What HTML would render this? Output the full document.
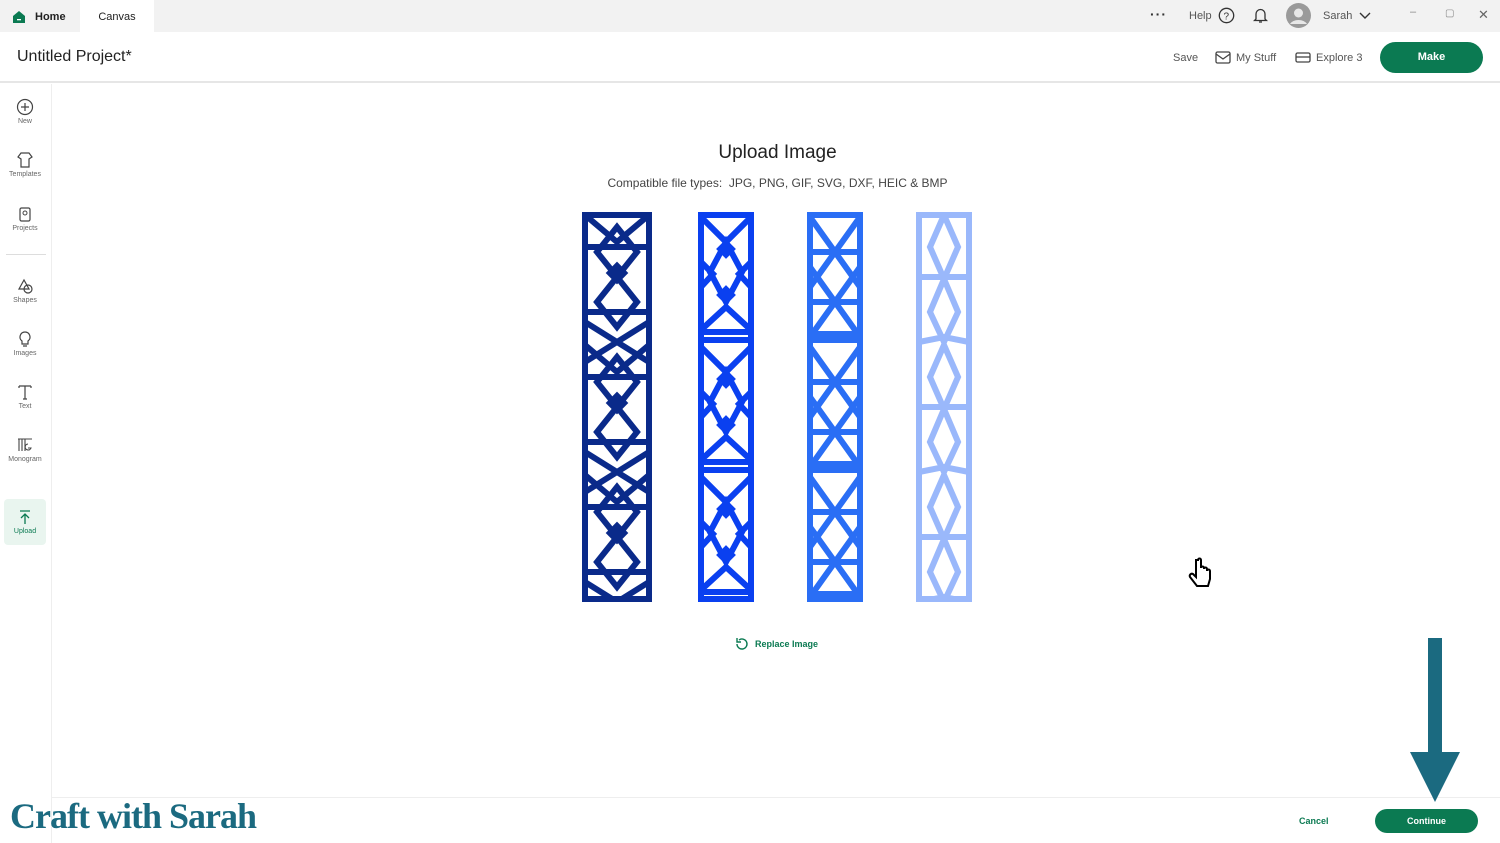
<!DOCTYPE html>
<html><head><meta charset="utf-8"><style>
*{margin:0;padding:0;box-sizing:border-box}
body{width:1500px;height:843px;overflow:hidden;background:#fff;font-family:"Liberation Sans",sans-serif;position:relative;color:#333}
.top{position:absolute;left:0;top:0;width:1500px;height:32px;background:#f2f2f2}
.tab{position:absolute;top:0;height:32px;font-size:11px;line-height:34px;color:#222}
.hdr{position:absolute;top:32px;left:0;width:1500px;height:51px;border-bottom:2px solid #e6e6e6;background:#fff}
.side{position:absolute;left:0;top:84px;width:52px;height:759px;border-right:1px solid #eee}
.si{position:absolute;left:0;width:50px;text-align:center;font-size:7px;color:#666}
.si svg{display:block;margin:0 auto 2px}
.t{position:absolute;font-size:11px;color:#555}
</style></head><body>
<div class="top"></div>
<svg style="position:absolute;left:12px;top:10px" width="14" height="14"><path d="M1 6L7 1 13 6V13H1Z" fill="#0b7a52"/><rect x="5" y="9" width="4" height="1.3" fill="#fff"/></svg>
<div class="tab" style="left:35px;font-weight:bold">Home</div>
<div class="tab" style="left:80px;width:74px;background:#fff;text-align:center">Canvas</div>
<div class="t" style="left:1150px;top:6px;font-size:14px;font-weight:bold;color:#333;letter-spacing:1px">···</div>
<div class="t" style="left:1189px;top:10px">Help</div>
<svg style="position:absolute;left:1218px;top:7px" width="17" height="17"><circle cx="8.5" cy="8.5" r="7.2" fill="none" stroke="#333" stroke-width="1.3"/><text x="5.5" y="12.5" font-size="10" font-family="Liberation Sans" fill="#333">?</text></svg>
<svg style="position:absolute;left:1253px;top:7px" width="15" height="17"><path d="M3 12V7a4.5 4.5 0 0 1 9 0v5l1.5 1.5h-12Z M6 15h3" fill="none" stroke="#333" stroke-width="1.3"/></svg>
<svg style="position:absolute;left:1286px;top:3px" width="25" height="25"><circle cx="12.5" cy="12.5" r="12.5" fill="#9a9a9a"/><circle cx="12.5" cy="10" r="4.5" fill="#e8e8e8"/><path d="M4 21a9 6 0 0 1 17 0" fill="#e8e8e8"/></svg>
<div class="t" style="left:1323px;top:10px">Sarah</div>
<svg style="position:absolute;left:1359px;top:11px" width="12" height="9"><path d="M1 2l5 5 5-5" fill="none" stroke="#333" stroke-width="1.4"/></svg>
<div class="t" style="left:1410px;top:6px;color:#888">–</div>
<div class="t" style="left:1445px;top:8px;color:#888;font-size:10px">▢</div>
<div class="t" style="left:1478px;top:7px;color:#666;font-size:13px">✕</div>
<div class="hdr"></div>
<div style="position:absolute;left:17px;top:48px;font-size:16px;color:#222">Untitled Project*</div>
<div class="t" style="left:1173px;top:52px">Save</div>
<svg style="position:absolute;left:1215px;top:51px" width="16" height="13"><rect x="1" y="1" width="14" height="11" rx="1.5" fill="none" stroke="#444" stroke-width="1.3"/><path d="M1 3l7 5 7-5" fill="none" stroke="#444" stroke-width="1.3"/></svg>
<div class="t" style="left:1236px;top:52px">My Stuff</div>
<svg style="position:absolute;left:1295px;top:52px" width="16" height="11"><rect x="1" y="1" width="14" height="9" rx="1.5" fill="none" stroke="#444" stroke-width="1.3"/><path d="M1 5h14" stroke="#444" stroke-width="1.3"/></svg>
<div class="t" style="left:1316px;top:52px">Explore 3</div>
<div style="position:absolute;left:1380px;top:42px;width:103px;height:31px;border-radius:16px;background:#0b7a52;color:#fff;font-weight:bold;font-size:11px;text-align:center;line-height:31px">Make</div>
<div class="side"></div>
<div class="si" style="top:98px"><svg width="18" height="18"><circle cx="9" cy="9" r="7.5" fill="none" stroke="#444" stroke-width="1.2"/><path d="M9 5v8M5 9h8" stroke="#444" stroke-width="1.2"/></svg>New</div>
<div class="si" style="top:151px"><svg width="18" height="18"><path d="M5 2h8l3 4-3 2v8H5V8L2 6Z" fill="none" stroke="#444" stroke-width="1.2"/></svg>Templates</div>
<div class="si" style="top:205px"><svg width="18" height="18"><rect x="4" y="3" width="10" height="13" rx="1.5" fill="none" stroke="#444" stroke-width="1.2"/><circle cx="9" cy="8" r="2" fill="none" stroke="#444"/></svg>Projects</div>
<div style="position:absolute;left:6px;top:254px;width:40px;border-top:1px solid #ddd"></div>
<div class="si" style="top:277px"><svg width="18" height="18"><path d="M3 12l5-9 5 9Z" fill="none" stroke="#444" stroke-width="1.2"/><circle cx="12" cy="12" r="4" fill="none" stroke="#444" stroke-width="1.2"/></svg>Shapes</div>
<div class="si" style="top:330px"><svg width="18" height="18"><path d="M9 2a5 5 0 0 1 3 9v3H6v-3A5 5 0 0 1 9 2ZM7 16h4" fill="none" stroke="#444" stroke-width="1.2"/></svg>Images</div>
<div class="si" style="top:383px"><svg width="18" height="18"><path d="M3 3h12M9 3v13M3 3v2M15 3v2M7 16h4" fill="none" stroke="#444" stroke-width="1.2"/></svg>Text</div>
<div class="si" style="top:436px"><svg width="18" height="18"><path d="M2 3h14M3 3v12M6 3v12M9 3v12M12 8a3 3 0 1 0 3 4h-3" fill="none" stroke="#444" stroke-width="1.1"/></svg>Monogram</div>
<div style="position:absolute;left:4px;top:499px;width:42px;height:46px;border-radius:4px;background:#e9f5ef"></div>
<div class="si" style="top:508px;color:#0b7a52"><svg width="18" height="18"><path d="M4 3h10M9 16V6M5 10l4-4 4 4" fill="none" stroke="#0b7a52" stroke-width="1.3"/></svg>Upload</div>
<div style="position:absolute;left:0;width:1555px;top:142px;text-align:center;font-size:19px;color:#222">Upload Image</div>
<div style="position:absolute;left:0;width:1555px;top:176px;text-align:center;font-size:12px;color:#444">Compatible file types:&nbsp; JPG, PNG, GIF, SVG, DXF, HEIC &amp; BMP</div>
<svg style="position:absolute;left:582px;top:212px" width="70" height="390" fill="none" stroke="#0a2a8a" stroke-width="6">
<rect x="3" y="3" width="64" height="384"/>
<g id="p1"><path d="M3 3L35 30 67 3M3 35h64M3 100h64M35 15L15 40 35 65 55 40ZM35 65L15 90 35 115 55 90ZM3 110L67 150M67 110L3 150"/><rect x="27" y="53" width="16" height="16" transform="rotate(45 35 61)" fill="#0a2a8a" stroke="none"/></g>
<use href="#p1" y="130"/><use href="#p1" y="260"/>
</svg>
<svg style="position:absolute;left:698px;top:212px" width="56" height="390" fill="none" stroke="#0a40f0" stroke-width="6">
<rect x="3" y="3" width="50" height="384"/>
<g id="p2"><path d="M3 5L28 30 53 5M3 118L28 95 53 118M3 120h50M3 128h50M28 30L12 60 28 90 44 60ZM3 50L15 62 3 75M53 50L41 62 53 75"/><rect x="21" y="30" width="14" height="14" transform="rotate(45 28 37)" fill="#0a40f0" stroke="none"/><rect x="21" y="76" width="14" height="14" transform="rotate(45 28 83)" fill="#0a40f0" stroke="none"/></g>
<use href="#p2" y="130"/><use href="#p2" y="260"/>
</svg>
<svg style="position:absolute;left:807px;top:212px" width="56" height="390" fill="none" stroke="#2a6ef5" stroke-width="6">
<rect x="3" y="3" width="50" height="384"/>
<g id="p3"><path d="M3 5L53 75M53 5L3 75M3 55L53 125M53 55L3 125M3 40h50M3 90h50M3 122h50M3 128h50"/></g>
<use href="#p3" y="130"/><use href="#p3" y="260"/>
</svg>
<svg style="position:absolute;left:916px;top:212px" width="56" height="390" fill="none" stroke="#9ab8fb" stroke-width="6">
<rect x="3" y="3" width="50" height="384"/>
<g id="p4"><path d="M28 3L14 35 28 67 42 35ZM28 67L14 100 28 130 42 100ZM3 65h50M3 130l25-5 25 5"/></g>
<use href="#p4" y="130"/><use href="#p4" y="260"/>
</svg>
<svg style="position:absolute;left:734px;top:636px" width="16" height="16"><path d="M3 8a5 5 0 1 0 2-4M3 2v4h4" fill="none" stroke="#0b7a52" stroke-width="1.4"/></svg>
<div style="position:absolute;left:755px;top:639px;font-size:9px;color:#0b7a52;font-weight:bold">Replace Image</div>
<svg style="position:absolute;left:1187px;top:557px" width="26" height="34"><path d="M9 3v17l-3-3c-2-1-4 1-3 3l7 9h11l2-7v-8c0-2-3-2-3 0v-2c0-2-3-2-3 0v-1c0-2-3-2-3 0V3c0-2-3-2-3 0Z" fill="#fff" stroke="#000" stroke-width="2"/></svg>
<div style="position:absolute;left:52px;top:797px;width:1448px;border-top:1px solid #eee"></div>
<div style="position:absolute;left:1299px;top:816px;font-size:9px;color:#0b7a52;font-weight:bold">Cancel</div>
<div style="position:absolute;left:1375px;top:809px;width:103px;height:24px;border-radius:12px;background:#0b7a52;color:#fff;font-weight:bold;font-size:9px;text-align:center;line-height:24px">Continue</div>
<svg style="position:absolute;left:1408px;top:636px" width="54" height="168"><rect x="20" y="2" width="14" height="118" fill="#1b6a80"/><path d="M2 116h50L27 166Z" fill="#1b6a80"/></svg>
<div style="position:absolute;left:10px;top:795px;font-family:'Liberation Serif',serif;font-size:36px;font-weight:bold;color:#1b6a80;letter-spacing:-1px">Craft with Sarah</div>
</body></html>
